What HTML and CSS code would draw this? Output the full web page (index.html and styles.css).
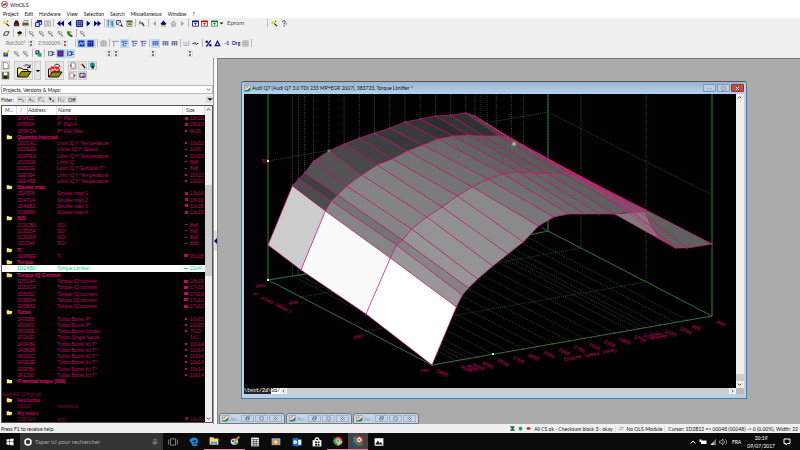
FILE: index.html
```html
<!DOCTYPE html>
<html lang="en">
  <head>
    <meta charset="UTF-8" />
    <meta name="viewport" content="width=device-width, initial-scale=1.0" />
    <title>WinOLS</title>
    <link rel="stylesheet" href="styles.css">
  </head>
  <body>
    <svg class="sprite" aria-hidden="true">
      <symbol id="i-wand" viewBox="0 0 16 16"><path d="M5 6l9 8" stroke="#222" stroke-width="3"/><path d="M1 3h7v6H1z" fill="#e8d820"/><path d="M9 1h3v4H9z" fill="#8a8a10"/></symbol>
      <symbol id="i-chip" viewBox="0 0 16 16"><path d="M5 1h6l3 7v6H2V8z" fill="#222"/><path d="M4 10h8v3H4z" fill="#a33"/></symbol>
      <symbol id="i-print" viewBox="0 0 16 16"><path d="M1 7h14v6H1z" fill="#555"/><path d="M5 1h9l-2 6H3z" fill="#ddd" stroke="#333"/><path d="M4 12h7v3H4z" fill="#cc4"/></symbol>
      <symbol id="i-win" viewBox="0 0 16 16"><path d="M5 1h10v9H5z" fill="#fff" stroke="#118" stroke-width="2"/><path d="M1 6h9v9H1z" fill="#cde" stroke="#118" stroke-width="2"/><path d="M5 2h10v3H5z" fill="#118"/></symbol>
      <symbol id="i-pages" viewBox="0 0 16 16"><path d="M1 2h6v12H1zM9 2h6v12H9z" fill="#e4e4e4" stroke="#aaa" stroke-width="2"/><path d="M3 6h3M11 6h3M3 10h3M11 10h3" stroke="#aaa"/></symbol>
      <symbol id="i-first" viewBox="0 0 16 16"><path d="M8 1v14L0 8zM16 1v14L8 8z" fill="#00008c"/></symbol>
      <symbol id="i-prev" viewBox="0 0 16 16"><path d="M12 1v14L4 8z" fill="#00008c"/></symbol>
      <symbol id="i-grid" viewBox="0 0 16 16"><path d="M1 1h14v14H1z" fill="#99c" stroke="#00008c" stroke-width="2"/><path d="M1 6h14M1 10h14M6 1v14M10 1v14" stroke="#00008c"/></symbol>
      <symbol id="i-next" viewBox="0 0 16 16"><path d="M4 1v14l8-7z" fill="#00008c"/></symbol>
      <symbol id="i-last" viewBox="0 0 16 16"><path d="M0 1v14l8-7zM8 1v14l8-7z" fill="#00008c"/></symbol>
      <symbol id="i-cols" viewBox="0 0 16 16"><path d="M1 2h4M3 2v12M8 3h3v10M13 2v13" fill="none" stroke="#567" stroke-width="2"/></symbol>
      <symbol id="i-find" viewBox="0 0 16 16"><path d="M1 1h9v9H1z" fill="#dde" stroke="#226" stroke-width="2"/><circle cx="9" cy="9" r="4" fill="#eef" stroke="#222"/><path d="M11 11l4 4" stroke="#222" stroke-width="3"/></symbol>
      <symbol id="i-note" viewBox="0 0 16 16"><path d="M2 1h12v14H2z" fill="#dd9" stroke="#444"/><path d="M2 2h12v3H2zM5 8h7v3H5z" fill="#353"/></symbol>
      <symbol id="i-tool" viewBox="0 0 16 16"><path d="M2 4l4-2 2 5 3-2 4 8-3 2-4-6-5 1z" fill="#888"/><path d="M9 5l5 9" stroke="#333" stroke-width="2"/></symbol>
      <symbol id="i-left" viewBox="0 0 16 16"><path d="M11 2v12L5 8z" fill="#999"/></symbol>
      <symbol id="i-right" viewBox="0 0 16 16"><path d="M5 2v12l6-6z" fill="#999"/></symbol>
      <symbol id="i-home" viewBox="0 0 16 16"><path d="M1 9l7-8 7 8z" fill="#00008c"/><path d="M3 9h10v3H3z" fill="#222"/><path d="M2 13h12v2H2z" fill="#bb3"/></symbol>
      <symbol id="i-home-off" viewBox="0 0 16 16"><path d="M2 9l6-7 6 7-3 3H5zM2 14h12" fill="#ccc" stroke="#999" stroke-width="2"/></symbol>
      <symbol id="i-doc-b" viewBox="0 0 16 16"><path d="M1 2h14v12H1z" fill="#fff" stroke="#118" stroke-width="2"/><path d="M1 2h14v3H1zM5 7h6l-3 5z" fill="#118"/></symbol>
      <symbol id="i-doc-r" viewBox="0 0 16 16"><path d="M1 2h14v12H1z" fill="#fff" stroke="#b22" stroke-width="2"/><path d="M1 2h14v3H1zM5 7h6l-3 5z" fill="#a11"/></symbol>
      <symbol id="i-doc-g" viewBox="0 0 16 16"><path d="M1 2h14v12H1z" fill="#fff" stroke="#195" stroke-width="2"/><path d="M1 2h14v3H1zM5 7h6l-3 5z" fill="#163"/></symbol>
      <symbol id="i-drop" viewBox="0 0 16 16"><path d="M2 5h12l-6 6z" fill="#111"/></symbol>
      <symbol id="i-help" viewBox="0 0 16 16"><path d="M3 5c0-5 8-4 7 0-1 2-3 2-3 5M7 12v3" fill="none" stroke="#118" stroke-width="2"/><path d="M12 5v7M9 9h6" stroke="#b90"/></symbol>
      <symbol id="i-link" viewBox="0 0 16 16"><path d="M1 12l4-8h9l-4 8z" fill="#eee" stroke="#333" stroke-width="2"/></symbol>
      <symbol id="i-key" viewBox="0 0 16 16"><path d="M2 7l6-5 6 3-2 4-5 1z" fill="#111"/><path d="M5 14l5-5" stroke="#990" stroke-width="3"/></symbol>
      <symbol id="i-gray" viewBox="0 0 16 16"><path d="M2 2h4v5h4v3h4v5H9v-4H5V8H2z" fill="#999"/><path d="M8 3l4 4" stroke="#888" stroke-width="2"/></symbol>
      <symbol id="i-green" viewBox="0 0 16 16"><path d="M2 3h7v5l5 5v2H8L3 9z" fill="#282"/><path d="M8 2h4v5H8z" fill="#bb2"/><path d="M11 12h4v3h-4z" fill="#222"/></symbol>
      <symbol id="i-2d" viewBox="0 0 16 16"><path d="M1 1h14v14H1z" fill="#13b"/><path d="M3 12l3-7 4 6 3-7" fill="none" stroke="#cdf" stroke-width="2"/></symbol>
      <symbol id="i-3d" viewBox="0 0 16 16"><path d="M1 1h14v14H1z" fill="#119"/><path d="M5 2v12M10 2v12M2 6h12" stroke="#8ae" stroke-width="1"/></symbol>
      <symbol id="i-sheet" viewBox="0 0 16 16"><path d="M2 2h12v12H2zM2 6h12M2 10h12M7 2v12" fill="#ddd" stroke="#aaa" stroke-width="2"/></symbol>
      <symbol id="i-tee" viewBox="0 0 16 16"><path d="M1 3h14M4 3v12" stroke="#88a" stroke-width="2"/></symbol>
      <symbol id="i-teeb" viewBox="0 0 16 16"><path d="M1 3h14M5 3v12M8 8h6M8 13h3" stroke="#44b" stroke-width="2"/></symbol>
      <symbol id="i-bits" viewBox="0 0 16 16"><path d="M1 4h14M1 9h14" stroke="#44b" stroke-width="2"/><path d="M3 3v10M8 3v10M13 3v10" stroke="#668" stroke-width="2"/></symbol>
      <symbol id="i-dots" viewBox="0 0 16 16"><path d="M2 4v6M7 4v6M13 2v8M1 12h14" stroke="#99c" stroke-width="2"/></symbol>
      <symbol id="i-wave" viewBox="0 0 16 16"><path d="M1 8h4l2-3 3 6 2-3h3" fill="none" stroke="#225" stroke-width="2"/></symbol>
      <symbol id="i-percent" viewBox="0 0 16 16"><path d="M13 1L3 15" stroke="#118" stroke-width="3"/><circle cx="4" cy="4" r="3" fill="#118"/><circle cx="12" cy="12" r="3" fill="#118"/></symbol>
      <symbol id="i-delta" viewBox="0 0 16 16"><path d="M8 3l5 10H3z" fill="none" stroke="#118" stroke-width="3"/></symbol>
      <symbol id="i-pen" viewBox="0 0 16 16"><path d="M1 6h10v9H1z" fill="#13a"/><path d="M4 11L14 1" stroke="#cb1" stroke-width="3"/></symbol>
      <symbol id="i-copy" viewBox="0 0 16 16"><path d="M1 1h9v9H1z" fill="#117"/><path d="M6 7h9v8H6z" fill="#2a4"/><path d="M3 3h4v4H3z" fill="#cde"/></symbol>
      <symbol id="i-bars" viewBox="0 0 16 16"><path d="M2 2v12M5 4h5v8H5M10 5h5M10 10h5" fill="none" stroke="#226" stroke-width="2"/></symbol>
      <symbol id="i-map" viewBox="0 0 16 16"><path d="M1 1h14v14H1z" fill="#22b"/><path d="M4 4h8v8H4z" fill="#a1206a"/></symbol>
      <symbol id="i-new" viewBox="0 0 16 16"><path d="M3 1h7l4 4v10H3z" fill="#fff" stroke="#222"/></symbol>
      <symbol id="i-save" viewBox="0 0 16 16"><path d="M1 1h14v14H1z" fill="#66701a" stroke="#111"/><path d="M4 1h8v6H4z" fill="#fff"/><path d="M4 10h8v5H4z" fill="#111"/></symbol>
      <symbol id="i-open" viewBox="0 0 32 32"><path d="M3 28V10h8l3 3h10v5" fill="#f6f07a" stroke="#111" stroke-width="2"/><path d="M3 28l8-11h19l-7 11z" fill="#8c8c10" stroke="#111" stroke-width="2"/><path d="M16 7c4-5 9-4 11 1M28 3v6h-6" fill="none" stroke="#111" stroke-width="2"/></symbol>
      <symbol id="i-openr" viewBox="0 0 32 32"><path d="M3 28V12h21v6" fill="#f6f07a" stroke="#111" stroke-width="2"/><path d="M7 7h18v14H7z" fill="#e22"/><path d="M10 17v-5l3 3 3-4 3 5 3-4" stroke="#fff" stroke-width="2" fill="none"/><path d="M3 28l8-10h19l-7 10z" fill="#8c8c10" stroke="#111" stroke-width="2"/><path d="M15 5c4-4 9-3 11 2" fill="none" stroke="#111" stroke-width="2"/></symbol>
      <symbol id="i-import" viewBox="0 0 16 16"><path d="M5 2h7l2 3v9H5z" fill="#fff" stroke="#222"/><path d="M1 8l4-3v6z" fill="#c22"/></symbol>
      <symbol id="i-export" viewBox="0 0 16 16"><path d="M2 2h7l2 3v9H2z" fill="#fff" stroke="#222"/><path d="M15 8l-4-3v6z" fill="#a11"/></symbol>
      <symbol id="i-magic" viewBox="0 0 16 16"><path d="M2 6l5-5 3 4-4 5z" fill="#ec3"/><path d="M7 5l7 9" stroke="#117" stroke-width="3"/></symbol>
      <symbol id="i-globe" viewBox="0 0 16 16"><circle cx="8" cy="7" r="6" fill="#29c"/><path d="M3 4l5-3 4 4-5 5z" fill="#193"/><path d="M6 9h5v6H6z" fill="#111"/></symbol>
      <symbol id="i-pic" viewBox="0 0 16 16"><path d="M2 3h12v9H2z" fill="#ecd" stroke="#226" stroke-width="2"/><path d="M6 11l4-5 4 7z" fill="#a38"/></symbol>
      <symbol id="i-folder" viewBox="0 0 16 16"><path d="M1 14V3h5l2 2h6v3" fill="#fffbc0" stroke="#b8a438"/><path d="M1 14l3-7h12l-3 7z" fill="#f2df6c"/></symbol>
      <symbol id="i-closed" viewBox="0 0 16 16"><path d="M1 14V3h5l2 2h7v9z" fill="#fcee8a"/></symbol>
      <symbol id="i-project" viewBox="0 0 16 16"><path d="M1 1h14v11l-4 3H1z" fill="#fff" stroke="#264" /><path d="M3 3h9L3 11z" fill="#e88"/><path d="M2 12c5 0 9-3 12-8v8l-3 2H2z" fill="#1c8a5a"/></symbol>
      <symbol id="i-min" viewBox="0 0 16 16"><path d="M3 8h10v4H3z" fill="#fff" stroke="#456"/></symbol>
      <symbol id="i-restore" viewBox="0 0 16 16"><path d="M5 2h9v7H5zM2 6h9v7H2z" fill="#fff" stroke="#456" stroke-width="2"/></symbol>
      <symbol id="i-max" viewBox="0 0 16 16"><path d="M3 3h10v10H3z" fill="#fff" stroke="#456" stroke-width="2"/><path d="M7 7h3v2H7z" fill="#456"/></symbol>
      <symbol id="i-close" viewBox="0 0 16 16"><path d="M3 3l10 10M13 3L3 13" stroke="#456" stroke-width="5"/><path d="M3 3l10 10M13 3L3 13" stroke="#fff" stroke-width="3"/></symbol>
      <symbol id="i-logo" viewBox="0 0 16 16"><circle cx="8" cy="8" r="7" fill="#fff" stroke="#d22" stroke-width="2"/><path d="M3 5l4 5 2-4 4 5M3 11l10-6" stroke="#333" fill="none" stroke-width="2"/></symbol>
    </svg>

    <header class="titlebar">
      <svg class="logo"><use href="#i-logo"/></svg>
      <span>WinOLS</span>
    </header>
    <nav class="menubar">
      <button>Project</button><button>Edit</button><button>Hardware</button><button>View</button><button>Selection</button><button>Search</button><button>Miscellaneous</button><button>Window</button><button>?</button>
    </nav>

    <section class="toolbars">
      <div class="toolbar">
        <div class="tools tools-main">
          <button class="tool"><svg><use href="#i-wand"/></svg></button>
          <button class="tool"><svg><use href="#i-chip"/></svg></button>
          <button class="tool"><svg><use href="#i-print"/></svg></button>
          <i class="sep"></i>
          <button class="tool"><svg><use href="#i-win"/></svg></button>
          <button class="tool"><svg><use href="#i-pages"/></svg></button>
          <i class="sep"></i>
          <button class="tool"><svg><use href="#i-first"/></svg></button>
          <button class="tool"><svg><use href="#i-prev"/></svg></button>
          <button class="tool"><svg><use href="#i-grid"/></svg></button>
          <button class="tool"><svg><use href="#i-next"/></svg></button>
          <button class="tool"><svg><use href="#i-last"/></svg></button>
          <i class="sep"></i>
          <button class="tool on"><svg><use href="#i-cols"/></svg></button>
          <button class="tool"><svg><use href="#i-find"/></svg></button>
          <button class="tool"><svg><use href="#i-note"/></svg></button>
          <i class="sep"></i>
          <button class="tool"><svg><use href="#i-tool"/></svg></button>
          <i class="sep"></i>
          <button class="tool"><svg><use href="#i-left"/></svg></button>
          <button class="tool"><svg><use href="#i-home"/></svg></button>
          <button class="tool"><svg><use href="#i-home-off"/></svg></button>
          <button class="tool"><svg><use href="#i-right"/></svg></button>
          <i class="sep"></i>
          <button class="tool"><svg><use href="#i-doc-b"/></svg></button>
          <button class="tool"><svg><use href="#i-doc-r"/></svg></button>
          <button class="tool"><svg><use href="#i-doc-g"/></svg></button>
        </div>
        <svg class="drop"><use href="#i-drop"/></svg>
        <select class="eprom" aria-label="Element type"><option>Eprom</option></select>
        <i class="sep"></i>
        <button class="tool help"><svg><use href="#i-wand"/></svg></button>
        <button class="tool help"><svg><use href="#i-help"/></svg></button>
      </div>
      <div class="toolbar">
        <div class="tools tools-hw">
          <button class="tool"><svg><use href="#i-link"/></svg></button>
          <i class="sep"></i>
          <button class="tool"><svg><use href="#i-key"/></svg></button>
          <i class="sep"></i>
          <button class="tool"><svg><use href="#i-gray"/></svg></button>
          <button class="tool"><svg><use href="#i-gray"/></svg></button>
          <button class="tool"><svg><use href="#i-gray"/></svg></button>
          <button class="tool"><svg><use href="#i-gray"/></svg></button>
          <button class="tool"><svg><use href="#i-green"/></svg></button>
          <i class="sep"></i>
          <button class="tool"><svg><use href="#i-gray"/></svg></button>
        </div>
      </div>
      <div class="toolbar">
        <input class="spin" aria-label="Rotation" value="Rot:300°"><i class="updown"></i>
        <input class="spin wide" aria-label="Zoom" value="Z:50000%"><i class="updown"></i>
        <div class="tools tools-view">
          <i class="sep"></i>
          <button class="tool on"><svg><use href="#i-2d"/></svg></button>
          <button class="tool on"><svg><use href="#i-3d"/></svg></button>
          <i class="sep"></i>
          <button class="tool"><svg><use href="#i-sheet"/></svg></button>
          <i class="sep"></i>
          <button class="tool"><svg><use href="#i-tee"/></svg></button>
          <button class="tool on"><svg><use href="#i-teeb"/></svg></button>
          <button class="tool"><svg><use href="#i-teeb"/></svg></button>
          <button class="tool"><svg><use href="#i-teeb"/></svg></button>
          <i class="sep"></i>
          <button class="tool on"><svg><use href="#i-bits"/></svg></button>
          <button class="tool"><svg><use href="#i-bits"/></svg></button>
          <button class="tool"><svg><use href="#i-bits"/></svg></button>
          <i class="sep"></i>
          <button class="tool"><svg><use href="#i-dots"/></svg></button>
          <button class="tool"><svg><use href="#i-wave"/></svg></button>
          <i class="sep"></i>
          <button class="tool"><svg><use href="#i-percent"/></svg></button>
          <button class="tool"><svg><use href="#i-delta"/></svg></button>
          <button class="tool">-1</button>
          <button class="tool">Org</button>
          <button class="tool"><svg><use href="#i-sheet"/></svg></button>
          <i class="sep"></i>
        </div>
      </div>
      <div class="toolbar">
        <div class="tools tools-edit">
          <button class="tool"><svg><use href="#i-pen"/></svg></button>
          <button class="tool"><svg><use href="#i-gray"/></svg></button>
          <button class="tool"><svg><use href="#i-gray"/></svg></button>
          <i class="sep"></i>
          <button class="tool"><svg><use href="#i-copy"/></svg></button>
          <i class="sep"></i>
          <button class="tool"><svg><use href="#i-bars"/></svg></button>
          <button class="tool on"><svg><use href="#i-map"/></svg></button>
          <button class="tool on"><svg><use href="#i-bars"/></svg></button>
        </div>
        <div class="spinners">
          <div class="pair"><i class="updown"></i><i class="updown"></i></div>
          <i class="updown"></i>
          <i class="updown"></i>
        </div>
      </div>
    </section>

    <main class="workspace">
      <aside class="sidebar">
        <div class="actions">
          <div class="stack">
            <button class="small"><svg><use href="#i-new"/></svg></button>
            <button class="small"><svg><use href="#i-save"/></svg></button>
          </div>
          <div class="pair">
            <button class="big"><svg><use href="#i-open"/></svg></button>
            <button class="arrow"><svg><use href="#i-drop"/></svg></button>
          </div>
          <button class="big"><svg><use href="#i-openr"/></svg></button>
          <div class="stack three">
            <button class="small"><svg><use href="#i-import"/></svg></button>
            <button class="small"><svg><use href="#i-magic"/></svg></button>
            <button class="small"><svg><use href="#i-globe"/></svg></button>
            <button class="small"><svg><use href="#i-export"/></svg></button>
            <button class="small"><svg><use href="#i-pic"/></svg></button>
          </div>
        </div>
        <div class="combo">
          <select aria-label="View"><option>Projects, Versions &amp; Maps:</option></select>
          <svg viewBox="0 0 8 8"><path d="M2 3l2 2 2-2" fill="none" stroke="#555"/></svg>
        </div>
        <div class="filter">
          <span>Filter:</span>
          <button><svg viewBox="0 0 16 16"><path d="M1 6h10v3H1zM10 10h5l-2 4z"/></svg></button>
          <button><svg viewBox="0 0 16 16"><path d="M6 3l4 8H2zM10 10h5l-2 4z"/></svg></button>
          <button><svg viewBox="0 0 16 16"><path d="M2 3h8v2H4v7H2zM10 10h5l-2 4z"/></svg></button>
          <button><svg viewBox="0 0 16 16"><path class="dark" d="M3 2l7 5-4 3zM10 10h5l-2 4z"/></svg></button>
          <button><svg viewBox="0 0 16 16"><path d="M1 3h2v9H1zM5 3l5 8h-3zM10 10h5l-2 4z"/></svg></button>
          <button class="off">Off</button>
          <button class="more"><svg><use href="#i-drop"/></svg></button>
        </div>
        <div class="list">
          <table class="maps">
            <thead>
              <tr><th>M...</th><th>/</th><th class="addr">Address</th><th>Name</th><th>Size</th></tr>
            </thead>
            <tbody>
              <tr><td></td><td>1F8420</td><td>P° Rail 3</td><td><i class="dot d3"></i>15x16</td></tr>
              <tr><td></td><td>1F8664</td><td>P° Rail 4</td><td><i class="dot d3"></i>15x16</td></tr>
              <tr><td></td><td>1F8FCA</td><td>P° Rail Max</td><td><i class="dot d2"></i>8x16</td></tr>
              <tr class="group"><td><svg><use href="#i-folder"/></svg></td><td>Quantity Injected</td></tr>
              <tr><td></td><td>1D2DAC</td><td>Limit IQ f° Temperature</td><td><i class="dot d2"></i>10x10</td></tr>
              <tr><td></td><td>1D2EEE</td><td>Limite IQ f° Speed</td><td><i class="dot d1"></i>10x6</td></tr>
              <tr><td></td><td>1D2FEA</td><td>Limit IQ f° Temperature</td><td><i class="dot d2"></i>10x10</td></tr>
              <tr><td></td><td>1D30D6</td><td>Limit IQ</td><td><i class="dot d1"></i>8x8</td></tr>
              <tr><td></td><td>1D321E</td><td>Limit IQ f° Exhaust T°</td><td><i class="dot d1"></i>8x8</td></tr>
              <tr><td></td><td>1EE964</td><td>Limit IQ f° Temperature</td><td><i class="dot d2"></i>10x10</td></tr>
              <tr><td></td><td>1EEA5B</td><td>Limit IQ f° Temperature</td><td><i class="dot d2"></i>10x10</td></tr>
              <tr class="group"><td><svg><use href="#i-folder"/></svg></td><td>Smoke map</td></tr>
              <tr><td></td><td>1D45F6</td><td>Smoke map 1</td><td><i class="dot d3"></i>13x16</td></tr>
              <tr><td></td><td>1D47D4</td><td>Smoke map 2</td><td><i class="dot d3"></i>13x16</td></tr>
              <tr><td></td><td>1D49B2</td><td>Smoke map 3</td><td><i class="dot d3"></i>13x16</td></tr>
              <tr><td></td><td>1D4B90</td><td>Smoke map 4</td><td><i class="dot d3"></i>13x16</td></tr>
              <tr class="group"><td><svg><use href="#i-folder"/></svg></td><td>SOI</td></tr>
              <tr><td></td><td>1C9CB0</td><td>SOI</td><td><i class="dot d1"></i>8x8</td></tr>
              <tr><td></td><td>1C9D54</td><td>SOI</td><td><i class="dot d1"></i>8x8</td></tr>
              <tr><td></td><td>1C9DF8</td><td>SOI</td><td><i class="dot d1"></i>8x8</td></tr>
              <tr><td></td><td>1D1344</td><td>SOI</td><td><i class="dot d1"></i>8x8</td></tr>
              <tr class="group"><td><svg><use href="#i-folder"/></svg></td><td>TI</td></tr>
              <tr><td></td><td>1E9BEE</td><td>TI</td><td><i class="dot d4"></i>20x15</td></tr>
              <tr class="group"><td><svg><use href="#i-folder"/></svg></td><td>Torque</td></tr>
              <tr class="selected"><td></td><td>1D2AB0</td><td>Torque Limitier</td><td><i class="dot d5"></i>22x4</td></tr>
              <tr class="group"><td><svg><use href="#i-folder"/></svg></td><td>Torque IQ Convert</td></tr>
              <tr><td></td><td>1D5144</td><td>Torque IQ convert</td><td><i class="dot d4"></i>16x16</td></tr>
              <tr><td></td><td>1D53CA</td><td>Torque IQ convert</td><td><i class="dot d4"></i>17x16</td></tr>
              <tr><td></td><td>1D5652</td><td>Torque IQ convert</td><td><i class="dot d4"></i>17x16</td></tr>
              <tr><td></td><td>1D58DA</td><td>Torque IQ convert</td><td><i class="dot d4"></i>17x16</td></tr>
              <tr><td></td><td>1D5B62</td><td>Torque IQ convert</td><td><i class="dot d4"></i>17x16</td></tr>
              <tr class="group"><td><svg><use href="#i-folder"/></svg></td><td>Turbo</td></tr>
              <tr><td></td><td>1F0688</td><td>Turbo Boost P°</td><td><i class="dot d2"></i>10x15</td></tr>
              <tr><td></td><td>1F0800</td><td>Turbo Boost P°</td><td><i class="dot d2"></i>10x15</td></tr>
              <tr><td></td><td>1F096E</td><td>Turbo Boost Limiter</td><td><i class="dot d2"></i>7x13</td></tr>
              <tr><td></td><td>1F0A52</td><td>Turbo Single Value</td><td><i class="dot"></i>1x1</td></tr>
              <tr><td></td><td>1F0A8A</td><td>Turbo Boost fct T°</td><td><i class="dot d2"></i>10x14</td></tr>
              <tr><td></td><td>1F0BD6</td><td>Turbo Boost fct T°</td><td><i class="dot d2"></i>10x14</td></tr>
              <tr><td></td><td>1F0D22</td><td>Turbo Boost fct T°</td><td><i class="dot d2"></i>10x14</td></tr>
              <tr><td></td><td>1F0E6E</td><td>Turbo Boost fct T°</td><td><i class="dot d2"></i>10x14</td></tr>
              <tr><td></td><td>1F0FBA</td><td>Turbo Boost fct T°</td><td><i class="dot d2"></i>10x14</td></tr>
              <tr><td></td><td>1F1106</td><td>Turbo Boost fct T°</td><td><i class="dot d2"></i>10x14</td></tr>
              <tr class="group"><td><svg><use href="#i-closed"/></svg></td><td>Potential maps (290)</td></tr>
              <tr></tr>
              <tr class="version"><td>Audi A6 (Original)</td></tr>
              <tr class="group dim"><td><svg><use href="#i-folder"/></svg></td><td>Hexdump</td></tr>
              <tr class="dim"><td></td><td>00000</td><td>Hexdump</td></tr>
              <tr class="group dim"><td><svg><use href="#i-folder"/></svg></td><td>My maps</td></tr>
              <tr class="dim"><td></td><td>10B1E4</td><td>egr1</td><td><i class="dot d3"></i>14x13</td></tr>
            </tbody>
          </table>
          <div class="vscroll">
            <svg viewBox="0 0 8 8"><path d="M2 5l2-2 2 2"/></svg>
            <i class="thumb"></i>
            <svg viewBox="0 0 8 8"><path d="M2 3l2 2 2-2"/></svg>
          </div>
        </div>
      </aside>
      <div class="splitter">
        <button aria-label="Hide list"><svg viewBox="0 0 3 6"><path d="M3 0v6L0 3z" fill="#00008c"/></svg></button>
      </div>

      <section class="desktop">
        <article class="window">
          <header>
            <svg class="doc"><use href="#i-project"/></svg>
            <h1>Audi Q7 (Audi Q7 3.0 TDI 233 MP+EGR 2007), 383723, Torque Limitier *</h1>
            <button><svg><use href="#i-min"/></svg></button>
            <button><svg><use href="#i-max"/></svg></button>
            <button class="close"><svg><use href="#i-close"/></svg></button>
          </header>
          <div class="client">
            <svg id="plot" class="plot" viewBox="244 94 492 294"></svg>
            <div class="vscroll">
              <svg viewBox="0 0 8 8"><path d="M2 5l2-2 2 2"/></svg>
              <i class="thumb"></i>
              <svg viewBox="0 0 8 8"><path d="M2 3l2 2 2-2"/></svg>
            </div>
          </div>
          <footer>
            <button>\text</button><button>/2d\</button><button class="current">3d/</button>
            <svg class="step" viewBox="0 0 8 8"><path d="M5 2L3 4l2 2"/></svg>
            <i class="track"></i>
            <svg class="step" viewBox="0 0 8 8"><path d="M3 2l2 2-2 2"/></svg>
            <i class="corner"></i>
          </footer>
        </article>

        <div class="minimized">
          <div class="mini"><svg class="doc"><use href="#i-project"/></svg><span>Au...</span><button><svg><use href="#i-restore"/></svg></button><button><svg><use href="#i-max"/></svg></button><button><svg><use href="#i-close"/></svg></button></div>
          <div class="mini"><svg class="doc"><use href="#i-project"/></svg><span>Au...</span><button><svg><use href="#i-restore"/></svg></button><button><svg><use href="#i-max"/></svg></button><button><svg><use href="#i-close"/></svg></button></div>
          <div class="mini"><svg class="doc"><use href="#i-project"/></svg><span>Au...</span><button><svg><use href="#i-restore"/></svg></button><button><svg><use href="#i-max"/></svg></button><button><svg><use href="#i-close"/></svg></button></div>
        </div>
      </section>
    </main>

    <footer class="statusbar">
      <span class="hint">Press F1 to receive help.</span>
      <svg viewBox="0 0 16 16"><path d="M1 1h14v3l-5 4 5 4v3H1v-3l5-4-5-4z" fill="#1d6b2a"/></svg>
      <svg viewBox="0 0 16 16"><path d="M5 2h6l3 6-3 6H5L2 8z" fill="#12a02c"/></svg>
      <svg viewBox="0 0 16 16"><path d="M5 4h7l3 4-3 4H5L1 8z" fill="#d01822"/></svg>
      <span class="cell">All CS ok - Checksum block 3 : okay</span>
      <svg viewBox="0 0 16 16"><path d="M1 12l4-8h9l-4 8z" fill="#eee" stroke="#333"/></svg>
      <span class="cell">No OLS-Module</span>
      <span class="cell">Cursor: 1D2B12 =&gt; 00048 (00048) -&gt; 0 (0.00%), Width: 22</span>
    </footer>

    <footer class="taskbar">
      <button class="start"><svg viewBox="0 0 16 16"><path d="M1 3l6-1v5H1zM8 2l7-1v6H8zM1 8h6v6l-6-1zM8 8h7v7l-7-1z" fill="#fff"/></svg></button>
      <label class="search">
        <svg viewBox="0 0 16 16"><circle cx="8" cy="8" r="6" fill="none" stroke="#fff" stroke-width="3"/></svg>
        <input type="text" placeholder="Taper ici pour rechercher" aria-label="Taper ici pour rechercher">
        <svg viewBox="0 0 16 16"><path d="M6 2h4v7H6zM4 7v4h8V7M8 11v4" fill="none" stroke="#aaa"/></svg>
      </label>
      <nav class="apps">
        <button><svg viewBox="0 0 16 16"><path d="M4 3h8v10H4zM1 4v8M15 4v8" fill="none" stroke="#bbb"/></svg></button>
        <button><svg viewBox="0 0 16 16"><path d="M14 9H5c0 5 5 5 8 3M2 7c2-6 11-7 11 1M2 8c1-2 4-4 7-3" fill="none" stroke="#1d8be0" stroke-width="3"/></svg></button>
        <button class="open"><svg viewBox="0 0 16 16"><path d="M1 2h6l1 2h7v10H1z" fill="#f7d672"/><path d="M3 9h10v5h-3v-2H6v2H3z" fill="#3aa0e0"/></svg></button>
        <button class="open"><svg viewBox="0 0 16 16"><ellipse cx="7" cy="9" rx="6" ry="5" fill="#b9dcf2"/><circle cx="5" cy="8" r="2" fill="#d33"/><circle cx="9" cy="11" r="2" fill="#3a5"/><path d="M8 8l7-7" stroke="#d98a2a" stroke-width="3"/></svg></button>
        <button><svg viewBox="0 0 16 16"><path d="M2 1h12v14H2z" fill="#fff"/><path d="M3 4h10M3 7h10M3 10h10M3 13h10M6 4v11M10 4v11" stroke="#222"/></svg></button>
        <button><svg viewBox="0 0 16 16"><path d="M1 2h14v11H1z" fill="#6fb3e0"/><circle cx="8" cy="8" r="5" fill="#f08a24"/><path d="M6 5l5 3-5 3z" fill="#fff"/></svg></button>
        <button><svg viewBox="0 0 16 16"><path d="M7 4h8v9H7z" fill="#fff" stroke="#1070c8"/><path d="M1 2l9-1v14l-9-1z" fill="#1070c8"/><circle cx="5" cy="8" r="2" fill="none" stroke="#fff" stroke-width="2"/></svg></button>
        <button><svg viewBox="0 0 16 16"><path d="M1 5h14v10H1z" fill="#fff"/><path d="M5 5c0-5 6-5 6 0" fill="none" stroke="#fff" stroke-width="2"/><path d="M5 7h3v3H5zM9 7h3v3H9zM5 11h3v3H5zM9 11h3v3H9z" fill="#222"/></svg></button>
        <button class="open"><svg viewBox="0 0 16 16"><circle cx="8" cy="8" r="7" fill="#e0473b"/><path d="M8 8L2 4a7 7 0 0 0 5 11z" fill="#35a853"/><path d="M8 8h7a7 7 0 0 1-8 7z" fill="#fbc116"/><circle cx="8" cy="8" r="3" fill="#4a8af4" stroke="#fff"/></svg></button>
        <button class="open active"><svg viewBox="0 0 16 16"><path d="M1 1h9v14H1z" fill="#2a9a8a"/><path d="M1 8l7 7H1z" fill="#174ea0"/><path d="M9 8h6v7H9z" fill="#4a8a2a"/><circle cx="10" cy="6" r="5" fill="#fff" stroke="#d22" stroke-width="2"/><path d="M7 4l6 5M13 4L7 8" stroke="#333"/></svg></button>
        <button><svg viewBox="0 0 16 16"><path d="M1 2h14v12H1z" fill="#fff"/><path d="M2 12l4-6 3 4 2-2 3 4z" fill="#111"/></svg></button>
      </nav>
      <div class="tray">
        <svg viewBox="0 0 16 16"><path d="M3 11l5-5 5 5" fill="none" stroke="#fff" stroke-width="2"/></svg>
        <svg viewBox="0 0 16 16"><path d="M4 5h11v7H4zM1 3h4v5H1z" fill="#fff"/></svg>
        <svg viewBox="0 0 16 16"><path d="M14 2v12H2z" fill="#777"/><path d="M9 8v6H3z" fill="#ddd"/></svg>
        <svg viewBox="0 0 16 16"><path d="M1 6h3l4-4v12l-4-4H1zM10 5c2 2 2 4 0 6M13 3c3 3 3 7 0 10" fill="none" stroke="#fff"/></svg>
        <span>FRA</span>
        <time>20:19<br>09/07/2017</time>
        <svg class="bell" viewBox="0 0 16 16"><path d="M2 2h12v9H9l-3 3v-3H2z" fill="none" stroke="#fff" stroke-width="2"/></svg>
      </div>
    </footer>
    <script src="script.js"></script>
  </body>
</html>
```

FILE: styles.css
```css
* {
  box-sizing: border-box;
}

body {
  margin: 0;
  height: 100vh;
  display: flex;
  flex-direction: column;
  overflow: hidden;
  background: #f0f0f0;
  color: #111;
  font: 5px/6px Lato, sans-serif;
}

button,
input,
select {
  margin: 0;
  padding: 0;
  border: 0;
  border-radius: 0;
  background: none;
  color: inherit;
  font: inherit;
  appearance: none;
}

svg {
  display: block;
  flex: none;
}

.sprite {
  position: absolute;
  width: 0;
  height: 0;
}

/* title and menu */

.titlebar {
  display: flex;
  align-items: center;
  gap: 2px;
  height: 9px;
  padding: 0 1px;
  background: #fff;
}

.logo {
  width: 7px;
  height: 7px;
}

.menubar {
  display: flex;
  gap: 6px;
  height: 9px;
  padding: 0 3px;
  background: #fff;
}

/* toolbars */

.toolbar {
  display: flex;
  align-items: center;
  height: 10px;
  padding-left: 2px;
}

.tools {
  display: flex;
  align-items: center;
  height: 10px;
}

.tools-main {
  width: 217px;
}

.tools-hw {
  width: 85px;
}

.tools-view {
  width: 179px;
  margin-left: 6px;
}

.tools-edit {
  width: 73px;
}

.tool {
  flex: 1;
  display: flex;
  align-items: center;
  justify-content: center;
  height: 9px;
  color: #118;
  font-weight: bold;
  font-size: 5px;
}

.tool svg {
  width: 7px;
  height: 7px;
}

.tool.on {
  background: #bcdcf4;
}

.tool.help {
  flex: none;
  width: 10px;
}

.sep {
  flex: none;
  width: 1px;
  height: 8px;
  margin: 0 1px;
  background: #bbb;
}

.drop {
  width: 5px;
  height: 5px;
}

.eprom {
  width: 42px;
  padding-left: 3px;
  color: #555;
  font-size: 6px;
}

.spin {
  width: 26px;
  height: 8px;
  padding-left: 4px;
  color: #777;
}

.spin.wide {
  width: 28px;
}

.updown {
  flex: none;
  width: 6px;
  height: 7px;
  border: 1px solid #ddd;
  background: radial-gradient(circle at 50% 20%, #777 1px, transparent 1px),
    radial-gradient(circle at 50% 80%, #777 1px, transparent 1px);
}

.spinners {
  display: flex;
  gap: 31px;
  margin-left: 31px;
}

/* workspace */

.workspace {
  flex: 1;
  min-height: 0;
  display: flex;
}

.sidebar {
  display: flex;
  flex-direction: column;
  width: 213px;
  padding: 3px 0 1px 1px;
}

.actions {
  display: flex;
  gap: 4px;
  height: 24px;
}

.stack {
  display: grid;
  grid-template-columns: 9px;
  grid-auto-rows: 9px;
  gap: 1px;
}

.stack.three {
  grid-template-columns: repeat(3, 9px);
}

.pair {
  display: flex;
  gap: 1px;
}

.small,
.big,
.arrow {
  display: flex;
  align-items: center;
  justify-content: center;
  border: 1px solid #ccc;
  background: #e4e4e4;
}

.small svg {
  width: 7px;
  height: 7px;
}

.big {
  width: 19px;
  height: 19px;
}

.big svg {
  width: 16px;
  height: 16px;
}

.arrow {
  width: 7px;
  height: 19px;
}

.arrow svg {
  width: 6px;
  height: 6px;
}

.combo {
  display: flex;
  align-items: center;
  height: 9px;
  border: 1px solid #bbb;
  background: #fff;
}

.combo select {
  flex: 1;
  padding-left: 1px;
}

.combo svg {
  width: 7px;
  height: 7px;
}

.filter {
  display: flex;
  align-items: center;
  gap: 1px;
  height: 11px;
}

.filter span {
  width: 15px;
}

.filter button {
  width: 9px;
  height: 7px;
  background: #dadada;
}

.filter button svg {
  width: 8px;
  height: 7px;
  fill: #888;
}

.filter .dark {
  fill: #222;
}

.filter .off {
  width: 10px;
}

.filter .more {
  width: 7px;
  margin-left: auto;
}

.list {
  flex: 1;
  min-height: 0;
  display: flex;
  border: 1px solid #555;
  background: #000;
}

.maps {
  flex: 1;
  min-width: 0;
  display: flex;
  flex-direction: column;
  color: #cc0066;
  font: 5px/6px "Liberation Sans", sans-serif;
}

.maps tr {
  display: grid;
  grid-template-columns: 15px 40px 127px 1fr;
  align-items: center;
  min-height: 0;
}

.maps thead tr {
  grid-template-columns: 15px 11px 29px 126px 1fr;
  height: 9px;
  background: #fff;
  color: #333;
  font-family: Lato, sans-serif;
}

.maps th {
  padding: 0 0 0 3px;
  border-right: 1px solid #ddd;
  text-align: left;
  font-weight: normal;
  line-height: 9px;
}

.maps th.addr {
  padding: 0;
}

.maps th:nth-child(4) {
  padding-left: 1px;
}

.maps tbody {
  flex: 1;
  min-height: 0;
  display: grid;
  grid-auto-rows: minmax(0, 1fr);
}

.maps td {
  display: flex;
  align-items: center;
  padding: 0;
  white-space: nowrap;
}

.maps td svg {
  width: 7px;
  height: 6px;
  margin-left: 4px;
}

.maps .group td {
  color: #e8007e;
  font-weight: bold;
}

.maps .dim td,
.maps .version td {
  color: #900049;
}

.maps .group.dim td {
  color: #b8005e;
}

.maps .selected {
  background: #fff;
}

.maps .selected td {
  color: #00dd78;
}

.dot {
  width: 2px;
  height: 2px;
  margin: 0 3px 0 1px;
}

.dot.d1 {
  height: 1px;
  background: currentColor;
}

.dot.d2 {
  background: currentColor;
}

.dot.d3 {
  width: 3px;
  height: 3px;
  margin: 0 2px 0 1px;
  background: currentColor;
}

.dot.d4 {
  width: 4px;
  height: 3px;
  margin: 0 2px 0 0;
  background: currentColor;
}

.dot.d5 {
  width: 4px;
  height: 1px;
  margin: 0 2px 0 0;
  background: currentColor;
}

.vscroll {
  display: flex;
  flex-direction: column;
  width: 7px;
  background: #f0f0f0;
}

.vscroll svg,
.step {
  width: 7px;
  height: 7px;
  fill: none;
  stroke: #333;
}

.thumb {
  flex: 1;
  background: #cdcdcd;
}

.list .thumb {
  margin: 72px 0 139px;
}

.splitter {
  display: flex;
  align-items: center;
  width: 4px;
  border-left: 1px solid #999;
  background: #f8f8f8;
}

.splitter button {
  display: flex;
  align-items: center;
  width: 3px;
  height: 20px;
  background: #ddd;
}

.splitter svg {
  width: 3px;
  height: 6px;
}

.desktop {
  position: relative;
  flex: 1;
  border-top: 1px solid #777;
  border-left: 1px solid #888;
  background: #ababab;
}

/* map window */

.window {
  position: absolute;
  inset: 22px 53px 25px 23px;
  display: flex;
  flex-direction: column;
  padding: 0 2px 4px;
  border: 1px solid #4a7f9e;
  border-top-color: #555;
  border-radius: 3px 3px 0 0;
  background: #b9d1ea;
}

.window header {
  display: flex;
  align-items: center;
  gap: 1px;
  height: 12px;
  background: linear-gradient(#98b3d2, #b9d1ea);
}

.doc {
  width: 7px;
  height: 7px;
}

.window h1 {
  flex: 1;
  margin: 0;
  font-size: 5px;
  font-weight: normal;
}

.window header button {
  display: flex;
  align-items: center;
  justify-content: center;
  width: 13px;
  height: 8px;
  border: 1px solid #7d96b5;
  border-radius: 1px;
  background: #b9cde4;
}

.window header .close {
  background: #cc4a35;
  border-color: #8a3a32;
}

.window header button svg {
  width: 5px;
  height: 5px;
}

.client {
  flex: 1;
  min-height: 0;
  display: flex;
  background: #000;
}

.plot {
  flex: 1;
  min-width: 0;
  height: 100%;
}

.client .vscroll {
  width: 8px;
}

.client .thumb {
  flex: none;
  height: 7px;
  margin-top: auto;
}

.window footer {
  display: flex;
  align-items: center;
  height: 6px;
  background: #cdcdcd;
}

.window footer button {
  height: 6px;
  background: #222;
  color: #fff;
  font: 5px/6px "Liberation Mono", monospace;
}

.window footer .current {
  background: #fff;
  color: #000;
}

.step {
  height: 6px;
  background: #f0f0f0;
}

.track {
  flex: 1;
}

.corner {
  width: 8px;
  height: 6px;
  background: #bbb;
}

/* plot */

.plot polygon {
  stroke: none;
}

.plot .mesh {
  fill: none;
  stroke: #e0147e;
  stroke-width: 1;
  stroke-opacity: 0.65;
}

.plot .axis {
  fill: none;
  stroke: #2c6a34;
  stroke-width: 1;
}

.plot .guide {
  fill: none;
  stroke: #1b5021;
  stroke-width: 1;
  stroke-dasharray: 1 1;
}

.plot .point {
  fill: #f0148a;
}

.plot .mark {
  fill: #d8f4f0;
}

.plot .cursor {
  fill: #9cc4b4;
  stroke: #666;
}

.plot text {
  fill: #d80072;
  font: 5px "Liberation Mono", monospace;
}

/* minimized windows */

.minimized {
  position: absolute;
  left: 1px;
  bottom: 0;
  display: flex;
  gap: 1px;
}

.mini {
  display: flex;
  align-items: center;
  gap: 1px;
  width: 66px;
  height: 11px;
  padding: 0 2px;
  border: 1px solid #777;
  border-radius: 3px 3px 0 0;
  background: #c3d4e8;
  color: #8593a8;
}

.mini span {
  flex: 1;
}

.mini button {
  display: flex;
  align-items: center;
  justify-content: center;
  width: 13px;
  height: 7px;
  border: 1px solid #a3b4c9;
}

.mini button svg {
  width: 5px;
  height: 5px;
}

/* status and task bar */

.statusbar {
  display: flex;
  align-items: center;
  gap: 3px;
  height: 9px;
  padding: 0 2px 0 1px;
}

.statusbar svg {
  width: 5px;
  height: 5px;
}

.hint {
  flex: 1;
}

.cell {
  padding-right: 2px;
  border-right: 1px solid #ddd;
}

.cell:last-child {
  padding: 0;
  border: 0;
}

.taskbar {
  display: flex;
  align-items: center;
  height: 17px;
  background: #0c0b0b;
  color: #fff;
}

.start {
  display: flex;
  justify-content: center;
  width: 20px;
}

.taskbar svg {
  width: 8px;
  height: 8px;
}

.search {
  display: flex;
  align-items: center;
  gap: 3px;
  width: 143px;
  height: 17px;
  padding: 0 4px;
  background: #343434;
}

.search input {
  flex: 1;
  min-width: 0;
  font-size: 6px;
}

.search input::placeholder {
  color: #aaa;
}

.apps {
  display: flex;
  width: 226px;
}

.apps button {
  flex: 1;
  display: flex;
  align-items: center;
  justify-content: center;
  height: 17px;
}

.apps svg {
  width: 10px;
  height: 10px;
}

.apps .open {
  border-bottom: 1px solid #d882a8;
}

.apps .active {
  background: #444;
}

.tray {
  display: flex;
  align-items: center;
  gap: 2px;
  margin-left: auto;
  padding-right: 9px;
}

.tray span {
  margin: 0 4px 0 3px;
}

.tray time {
  text-align: center;
  line-height: 8px;
}

.tray .bell {
  margin-left: 6px;
}
```

FILE: script.js
```js
(function () {
  var plot = document.getElementById("plot");
  var speeds = [5000, 4600, 4500, 4400, 4250, 4000, 3750, 3500, 3250, 3000, 2750,
    2500, 2250, 2000, 1750, 1600, 1500, 1400, 1250, 1000, 800, 400];

  // screen height of the surface for each pressure row, back row first
  var rows = [
    { label: "950", x: 268, y: 280, h: [245, 186, 179, 173, 161, 151, 144, 138, 133, 128, 122, 119, 116, 115, 113, 116, 120, 124, 130, 139, 146, 159] },
    { label: "900", x: 301, y: 297, h: [270, 211, 201, 195, 186, 175, 165, 159, 151, 145, 139, 136, 135, 136, 136, 137, 140, 144, 149, 157, 164, 177] },
    { label: "800", x: 366, y: 331, h: [314, 258, 245, 240, 229, 217, 207, 196, 187, 179, 174, 172, 173, 174, 174, 175, 177, 180, 185, 192, 198, 210] },
    { label: "700", x: 432, y: 365, h: [365, 307, 295, 288, 279, 266, 254, 242, 226, 217, 214, 214, 214, 214, 212, 212, 212, 227, 239, 248, 248, 244] }
  ];

  var shades = [
    ["#ccc", "#4c4c4c", "#404040", "#545454", "#545454", "#484848", "#424242", "#404040", "#383838", "#3a3a3a", "#343434", "#2e2e2e", "#343434", "#303030", "#444"],
    ["#fafafa", "#858585", "#747474", "#848484", "#848484", "#808080", "#7c7c7c", "#747474", "#707070", "#6a6a6a", "#646464", "#5e5e5e", "#5a5a5a"],
    ["#fff", "#979797", "#848484", "#969696", "#949494", "#929292", "#8e8e8e", "#8a8a8a", "#787878", "#707070", "#6a6a6a", "#666", "#646464", "#606060"]
  ];

  function add(name, attrs, text) {
    var el = document.createElementNS("http://www.w3.org/2000/svg", name);
    for (var key in attrs) {
      el.setAttribute(key, attrs[key]);
    }
    if (text) {
      el.textContent = text;
    }
    plot.appendChild(el);
  }

  function offset(i) {
    return ((5000 - speeds[i]) / 4600) * 280;
  }

  function pt(r, i) {
    return rows[r].x + offset(i) + "," + rows[r].h[i];
  }

  function line(cls, x1, y1, x2, y2) {
    add("line", { class: cls, x1: x1, y1: y1, x2: x2, y2: y2 });
  }

  function box(cls, x, y, size) {
    add("rect", { class: cls, x: x - size / 2, y: y - size / 2, width: size, height: size });
  }

  function label(x, y, angle, text) {
    add("text", { transform: "translate(" + x + " " + y + ") rotate(" + angle + ")" }, text);
  }

  function drawGrid() {
    line("guide", 268, 161, 548, 112);
    line("guide", 548, 112, 712, 195);
    rows.forEach(function (row) {
      line("guide", row.x, row.y, row.x + 280, row.y - 49);
      line("guide", row.x + 280, 94, row.x + 280, row.y - 49);
    });
    speeds.forEach(function (speed, i) {
      var x = offset(i);
      line("guide", 432 + x, 365 - x * 0.175, 268 + x, 280 - x * 0.175);
      line("guide", 268 + x, 94, 268 + x, 280 - x * 0.175);
    });
    add("path", { class: "axis", d: "M268 94V280L432 365L712 316V94M712 316L548 231V94M268 280L306 274M530 235L548 231L542 228" });
  }

  function drawSurface() {
    var last = speeds.length - 1;
    for (var r = 0; r < 3; r++) {
      for (var i = last - 1; i >= 0; i--) {
        var fill = shades[r][Math.min(i, shades[r].length - 1)];
        add("polygon", { points: [pt(r, i), pt(r, i + 1), pt(r + 1, i + 1), pt(r + 1, i)].join(" "), fill: fill });
      }
    }
    // underside that shows where the front row folds down
    add("polygon", { points: [pt(3, 13), pt(3, 16), pt(3, 17), pt(3, 18), pt(3, 19)].join(" "), fill: "#7c7c7c" });
    add("polyline", { class: "mesh", points: [pt(3, 13), pt(3, 19)].join(" ") });
    for (r = 0; r < 4; r++) {
      add("polyline", { class: "mesh", points: speeds.map(function (s, n) { return pt(r, n); }).join(" ") });
      speeds.forEach(function (s, n) {
        box("point", rows[r].x + offset(n), rows[r].h[n], 1);
      });
    }
    speeds.forEach(function (s, n) {
      add("polyline", { class: "mesh", points: [pt(0, n), pt(1, n), pt(2, n), pt(3, n)].join(" ") });
    });
  }

  function drawLabels() {
    speeds.forEach(function (speed, i) {
      var x = 432 + offset(i);
      var y = 365 - offset(i) * 0.175;
      box("point", x, y, 1);
      label(x + 4, y + 7, 25, speed);
    });
    rows.forEach(function (row) {
      box("point", row.x, row.y, 1);
      label(row.x - 12, row.y + 8, -10, row.label);
    });
    label(262, 163, 0, "50");
    label(253, 295, 26, "P°_Atmo (mbar)");
    label(564, 361, -10, "Engine Speed (RPM)");
    box("mark", 268, 161, 2);
    box("mark", 268, 280, 2);
    box("mark", 493, 354, 2);
    box("cursor", 329, 151, 2);
    box("cursor", 514, 144, 4);
  }

  drawGrid();
  drawSurface();
  drawLabels();
})();
```
